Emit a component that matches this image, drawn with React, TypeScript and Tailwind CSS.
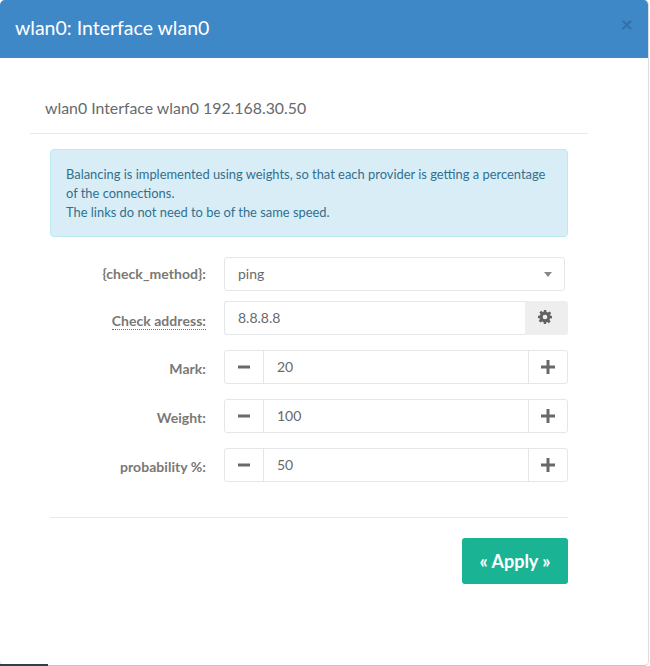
import React from "react";

function Stepper({ label, value }: { label: string; value: string }) {
  return (
    <div className="flex items-center h-[34px] mb-[15px]">
      <label className="w-[156px] text-right font-bold text-[14px] tracking-[0.05px] text-[#7a7876] pt-[3px] shrink-0">{label}</label>
      <div className="ml-[18px] w-[344px] h-[34px] flex border border-[#e5e6e7] rounded-[3px] bg-white">
        <div className="w-[39px] shrink-0 flex items-center justify-center border-r border-[#e5e6e7]">
          <svg width="12" height="12" viewBox="0 0 12 12" className="-mt-[1px]"><rect x="0" y="4.500" width="12" height="3" fill="#676a6c" /></svg>
        </div>
        <div className="flex-1 pl-[13px] flex items-center text-[14px] text-[#676a6c] -mt-[1px]">{value}</div>
        <div className="w-[39px] shrink-0 flex items-center justify-center border-l border-[#e5e6e7]">
          <svg width="14" height="14" viewBox="0 0 14 14" className="-mt-[1px] -ml-[1px]"><path d="M5.500 0h3v5.500H14v3H8.500V14h-3V8.500H0v-3h5.500z" fill="#676a6c" /></svg>
        </div>
      </div>
    </div>
  );
}

export default function App() {
  return (
    <div className="w-[650px] h-[666px] bg-white relative overflow-hidden" style={{ fontFamily: '"Lato", sans-serif' }}>
      <div className="w-[649px] h-[666px] bg-white rounded-[5px] border-r border-b border-r-[#dddddd] border-b-[#c4c4c4] relative overflow-hidden">
        <div className="h-[58px] bg-[#3f88c8] flex items-center pl-[15px] relative">
          <span className="text-white text-[19.5px] leading-none -mt-[3px]">wlan0: Interface wlan0</span>
          <span className="absolute right-[15px] top-[14px] text-[#2f6b9f] text-[21px] leading-[20px] font-bold opacity-80">×</span>
        </div>
        <div className="pt-[41px] px-[30px]">
          <div className="h-[35px] border-b border-[#e7eaec] w-[558px] pl-[15px] text-[15.85px] leading-[18px] text-[#676a6c]">
            wlan0 Interface wlan0 192.168.30.50
          </div>
          <div className="ml-[20px] mt-[15px] w-[518px] h-[88px] bg-[#d9edf7] border border-[#bce8f1] rounded-[4px] pl-[15px] pr-[15px] pt-[15px] text-[12.9px] leading-[19px] text-[#31708f]">
            Balancing is implemented using weights, so that each provider is getting a percentage of the connections.
            <br />
            The links do not need to be of the same speed.
          </div>
          <div className="ml-[20px] mt-[20px]">
            <div className="flex items-center h-[34px] mb-[10px]">
              <label className="w-[156px] text-right font-bold text-[14px] tracking-[0.05px] text-[#7a7876] shrink-0 -mt-[1px]">{"{check_method}:"}</label>
              <div className="ml-[18px] w-[341px] h-[34px] border border-[#e5e6e7] rounded-[3px] flex items-center justify-between pl-[13px] pr-[12px] text-[14px] text-[#676a6c]">
                <span className="-mt-[2px]">ping</span>
                <span className="w-0 h-0 border-x-[4px] border-x-transparent border-t-[5px] border-t-[#888888]" />
              </div>
            </div>
            <div className="flex items-center h-[34px] mb-[15px]">
              <label className="w-[156px] text-right font-bold text-[14px] tracking-[0.05px] text-[#7a7876] shrink-0 pt-[4px]">
                <span className="border-b border-dotted border-[#73716f]">Check address:</span>
              </label>
              <div className="ml-[18px] w-[344px] h-[34px] flex">
                <div className="flex-1 border border-[#e5e6e7] border-r-0 rounded-l-[3px] pl-[13px] flex items-center text-[14px] text-[#676a6c]">
                  <span className="-mt-[2px]">8.8.8.8</span>
                </div>
                <div className="w-[43px] bg-[#eeeeee] rounded-r-[3px] flex items-center justify-center">
                  <svg width="14" height="14" viewBox="0 0 24 24" fill="#5f6366" className="-ml-[3px] -mt-[2px]"><path d="M10 0h4l.6 3.300 2.300 1 2.800-1.900 2.900 2.900-1.900 2.800 1 2.300L24 10v4l-3.300.6-1 2.300 1.900 2.800-2.900 2.900-2.800-1.900-2.300 1L14 24h-4l-.6-3.300-2.300-1-2.800 1.900-2.900-2.900 1.900-2.800-1-2.300L0 14v-4l3.300-.6 1-2.300-1.900-2.800 2.900-2.900 2.800 1.900 2.300-1zM12 8a4 4 0 1 0 0 8 4 4 0 0 0 0-8z" fillRule="evenodd" /></svg>
                </div>
              </div>
            </div>
            <Stepper label="Mark:" value="20" />
            <Stepper label="Weight:" value="100" />
            <Stepper label="probability %:" value="50" />
          </div>
          <div className="ml-[20px] mt-[35px] w-[518px] border-t border-[#e7eaec] pt-[20px] flex justify-end">
            <button className="w-[106px] h-[46px] bg-[#1ab394] rounded-[3px] text-white font-bold text-[18px]">« Apply »</button>
          </div>
        </div>
      </div>
      <div className="absolute left-0 bottom-0 w-[48px] h-[2px] bg-[#2f4050]" />
    </div>
  );
}
